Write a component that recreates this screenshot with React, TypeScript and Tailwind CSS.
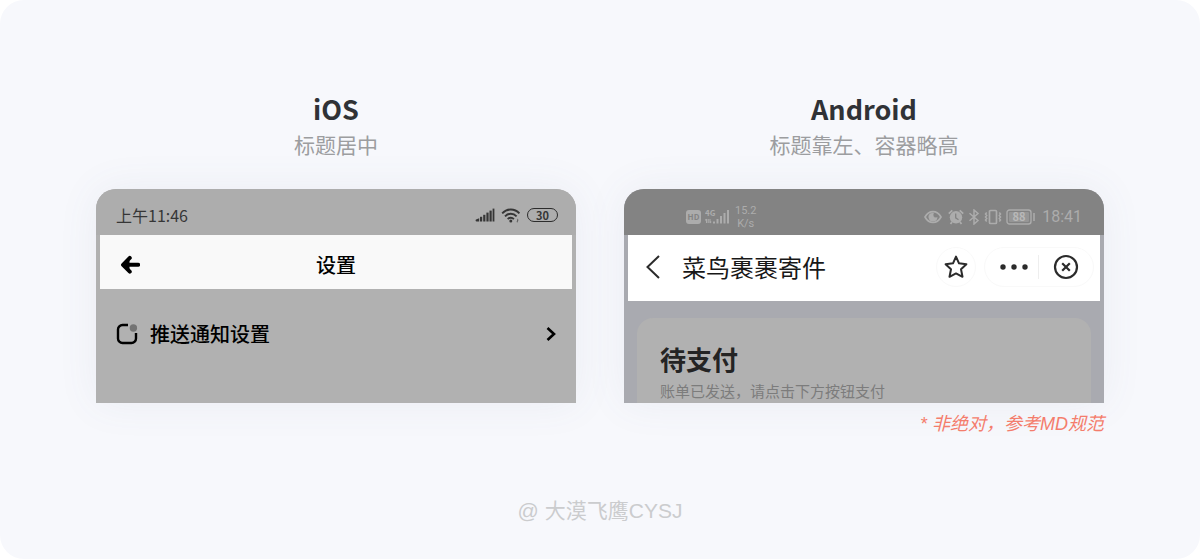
import type { ReactNode } from 'react';

interface IColumnProps {
    title: string;
    subtitle: string;
    children: ReactNode;
}

const Column = ({ title, subtitle, children }: IColumnProps) => (
    <section className="flex min-w-0 flex-1 flex-col">
        <h2 className="text-center text-[27px] leading-9 font-bold text-[#303236]">{title}</h2>
        <p className="text-center text-[21px] leading-[34px] text-[#9c9da0]">{subtitle}</p>
        {children}
    </section>
);

const SignalIcon = () => (
    <svg width="20" height="14" viewBox="0 0 20 14" fill="currentColor">
        <path d="M1 11.6l3.2-1.4v3.3H1.5C.6 13.5.3 12.1 1 11.6z" />
        <rect x="5" y="8.8" width="2.2" height="4.7" />
        <rect x="8.2" y="6.8" width="2.2" height="6.7" />
        <rect x="11.4" y="4.6" width="2.2" height="8.9" />
        <rect x="14.5" y="2.6" width="2.2" height="10.9" />
        <rect x="17.6" y="0.6" width="1.8" height="12.9" />
    </svg>
);

const WifiIcon = () => (
    <svg width="20" height="15" viewBox="0 0 20 15" fill="none" stroke="currentColor" strokeWidth="1.9">
        <path d="M1.2 5.4c4.8-5.2 12.4-5.2 17.2 0" />
        <path d="M4 8.4c3.3-3.5 8.3-3.5 11.6 0" />
        <path d="M6.7 11.1c1.8-1.8 4.4-1.8 6.2 0" />
        <circle cx="9.8" cy="13" r="1.5" fill="currentColor" stroke="none" />
        <path d="M16.5 10.8v3.6M17.6 12l-2 1.6" strokeWidth="0.8" opacity="0.6" />
    </svg>
);

const BoldArrowIcon = () => (
    <svg width="20" height="20" viewBox="0 0 20 20" fill="none" stroke="currentColor" strokeWidth="3.9" strokeLinecap="round" strokeLinejoin="round">
        <path d="M9.8 2.9L3 9.8l6.8 6.9M4 9.8h14.2" />
        <path d="M4.5 9.8L9 5.5v8.6z" strokeWidth="1" fill="currentColor" />
    </svg>
);

const PushIcon = () => (
    <svg width="22" height="22" viewBox="0 0 22 22" fill="none">
        <path d="M12 2H6.5A4.5 4.5 0 0 0 2 6.5v9A4.5 4.5 0 0 0 6.5 20h9a4.5 4.5 0 0 0 4.5-4.5V10" stroke="currentColor" strokeWidth="2.4" />
        <circle cx="17.4" cy="5" r="3.7" fill="#737373" />
    </svg>
);

const MobileDataIcon = () => (
    <svg width="26" height="18" viewBox="0 0 26 18" fill="currentColor">
        <text x="0" y="8" fontSize="8" fontWeight="700">4G</text>
        <path d="M1.5 15v-4M.3 12.3L1.5 11M5 11v4M5 15l1.2-1.3M3.2 11v4" stroke="currentColor" strokeWidth="1.1" fill="none" />
        <rect x="8" y="13.5" width="2" height="2" />
        <rect x="11.5" y="11" width="2" height="4.5" />
        <rect x="15" y="8" width="2" height="7.5" />
        <rect x="18.5" y="5" width="2" height="10.5" />
        <rect x="22" y="2" width="2" height="13.5" />
    </svg>
);

const EyeIcon = () => (
    <svg width="18" height="14" viewBox="0 0 18 14" fill="none" stroke="currentColor">
        <path d="M1 7c4-7.3 12-7.3 16 0-4 7.3-12 7.3-16 0z" strokeWidth="1.7" />
        <path d="M8 3a4.2 4.2 0 1 0 5.2 4.4C11.5 8.5 8 7 9.5 3.2z" fill="currentColor" strokeWidth="0.6" />
    </svg>
);

const AlarmIcon = () => (
    <svg width="16" height="16" viewBox="0 0 16 16" fill="none">
        <circle cx="8" cy="8.3" r="6.2" fill="currentColor" />
        <path d="M.8 4.6l3.5-3.3M15.2 4.6l-3.5-3.3M4 13l-1.5 2M12 13l1.5 2" stroke="currentColor" strokeWidth="1.8" />
        <path d="M7.7 4.6v4.2l2.8 1.9" stroke="#838383" strokeWidth="1.3" />
    </svg>
);

const BluetoothIcon = () => (
    <svg width="12" height="16" viewBox="0 0 12 16" fill="none" stroke="currentColor" strokeWidth="1.5">
        <path d="M1.5 4.3l8.5 7.2L6 15V1l4 3.5-8.5 7.2" />
    </svg>
);

const VibrateIcon = () => (
    <svg width="18" height="16" viewBox="0 0 18 16" fill="none" stroke="currentColor">
        <rect x="5.5" y="1.5" width="7" height="13" rx="1" strokeWidth="1.7" />
        <path d="M2.7 3.5L1.5 5l1.2 1.5L1.5 8l1.2 1.5L1.5 11l1.2 1.5M15.3 3.5L16.5 5l-1.2 1.5L16.5 8l-1.2 1.5 1.2 1.5-1.2 1.5" strokeWidth="1.5" />
    </svg>
);

const BatteryIcon = () => (
    <svg width="30" height="16" viewBox="0 0 30 16" fill="none">
        <rect x="1" y="1" width="24" height="14" rx="2.5" stroke="currentColor" strokeWidth="1.4" />
        <rect x="3" y="3" width="20" height="10" rx="1" fill="currentColor" opacity="0.45" />
        <path d="M28 4v8" stroke="currentColor" strokeWidth="1.5" />
        <text x="13" y="12" textAnchor="middle" fontSize="11" fontWeight="700" fill="#b9b9b9">88</text>
    </svg>
);

const StarIcon = () => (
    <svg width="24" height="24" viewBox="0 0 24 24" fill="none" stroke="currentColor" strokeWidth="2" strokeLinejoin="round">
        <path d="M12 1.6l3 6.7 7.4.9-5.4 5 1.5 7.6-6.5-3.4-6.5 3.4L7 14.2l-5.4-5 7.4-.9z" />
    </svg>
);

const CloseIcon = () => (
    <svg width="26" height="26" viewBox="0 0 26 26" fill="none" stroke="currentColor" strokeWidth="2.2">
        <circle cx="13" cy="13" r="11" />
        <path d="M9.2 9.2l7.6 7.6M16.8 9.2l-7.6 7.6" />
    </svg>
);

const IosPhone = () => (
    <div className="mt-7 h-[214px] overflow-hidden rounded-t-[20px] bg-[#b1b1b1] shadow-[0_0_40px_rgba(90,100,140,0.08)]">
        {/* Status bar */}
        <div className="flex h-[46px] items-center bg-[#adadad] pt-1.5 pr-[18px] pl-5 text-[#363636]">
            <span className="text-base leading-6">上午11:46</span>
            <div className="ml-auto flex items-center gap-1.5">
                <SignalIcon />
                <WifiIcon />
                <span className="flex h-[14px] w-[31px] items-center justify-center rounded-full border border-[#2c2c2c] text-[11px] leading-3 font-bold">30</span>
            </div>
        </div>

        {/* Navigation bar */}
        <header className="mx-1 grid h-[54px] grid-cols-[1fr_auto_1fr] items-center bg-[#f9f9f9] px-5 pt-1.5 text-black">
            <button aria-label="返回" className="justify-self-start">
                <BoldArrowIcon />
            </button>
            <h3 className="text-xl leading-6 font-medium">设置</h3>
        </header>

        {/* Settings row */}
        <button className="mt-[33px] flex w-full items-center pr-[18px] pl-5 text-black">
            <PushIcon />
            <span className="ml-3 text-xl leading-6 font-medium">推送通知设置</span>
            <svg className="ml-auto" width="14" height="16" viewBox="0 0 14 16" fill="none" stroke="currentColor" strokeWidth="2.6">
                <path d="M3.5 2L10 8l-6.5 6" />
            </svg>
        </button>
    </div>
);

const AndroidPhone = () => (
    <div className="mt-7 h-[214px] overflow-hidden rounded-t-[20px] bg-[#a9aab0] shadow-[0_0_40px_rgba(90,100,140,0.08)]">
        {/* Status bar */}
        <div className="flex h-[46px] items-center bg-[#838383] pt-2.5 pr-[22px] pl-[62px] text-[#acacac]">
            <span className="flex h-[14px] w-[15px] items-center justify-center rounded-[3px] bg-[#acacac] text-[8px] font-bold text-[#838383]">HD</span>
            <span className="ml-1">
                <MobileDataIcon />
            </span>
            <span className="ml-1 flex flex-col items-center font-['Roboto','Noto_Sans_CJK_SC',sans-serif] text-[11px] leading-[13px]">
                <span>15.2</span>
                <span>K/s</span>
            </span>
            <div className="ml-auto flex items-center gap-1">
                <EyeIcon />
                <span className="ml-0.5">
                    <AlarmIcon />
                </span>
                <BluetoothIcon />
                <VibrateIcon />
                <BatteryIcon />
                <span className="ml-0.5 font-['Roboto','Noto_Sans_CJK_SC',sans-serif] text-base leading-6">18:41</span>
            </div>
        </div>

        {/* Navigation bar */}
        <header className="mx-1 flex h-[66px] items-center bg-white pr-1.5 pb-0.5 pl-4 text-[#2b2b2b]">
            <button aria-label="返回">
                <svg width="18" height="26" viewBox="0 0 18 26" fill="none" stroke="currentColor" strokeWidth="2">
                    <path d="M15 2L3.5 13 15 24" />
                </svg>
            </button>
            <h3 className="ml-5 text-2xl leading-8 text-[#181818]">菜鸟裹裹寄件</h3>
            <button aria-label="收藏" className="ml-auto flex size-10 items-center justify-center rounded-full border border-[#f9f9f9]">
                <StarIcon />
            </button>
            <div className="ml-2 flex h-10 items-center rounded-full border border-[#f9f9f9]">
                <button aria-label="更多" className="flex h-6 w-[54px] items-center justify-end border-r border-[#eeeeee] pr-2.5">
                    <svg width="28" height="6" viewBox="0 0 28 6" fill="currentColor">
                        <circle cx="3" cy="3" r="2.7" />
                        <circle cx="14" cy="3" r="2.7" />
                        <circle cx="25" cy="3" r="2.7" />
                    </svg>
                </button>
                <button aria-label="关闭" className="flex w-[54px] justify-center">
                    <CloseIcon />
                </button>
            </div>
        </header>

        {/* Payment card */}
        <div className="mx-[13px] mt-[17px] h-24 rounded-t-2xl bg-[#b1b1b1] px-[23px] pt-[23px]">
            <h4 className="text-[26px] leading-9 font-bold text-[#242424]">待支付</h4>
            <p className="text-[15px] leading-7 text-[#7c7c7c]">账单已发送，请点击下方按钮支付</p>
        </div>
    </div>
);

export default function App() {
    return (
        <div className="bg-white">
            <main
                lang="zh-CN"
                className="flex min-h-screen flex-col rounded-3xl bg-[#f7f8fc] px-24 pt-[91px] pb-8 font-['Noto_Sans_CJK_SC',sans-serif]"
            >
                <div className="flex gap-12">
                    <Column title="iOS" subtitle="标题居中">
                        <IosPhone />
                    </Column>
                    <Column title="Android" subtitle="标题靠左、容器略高">
                        <AndroidPhone />
                        <p className="mt-[7px] text-right font-['Liberation_Sans','Noto_Sans_CJK_SC',sans-serif] text-lg leading-7 text-[#f47d6c] italic">
                            * 非绝对，参考MD规范
                        </p>
                    </Column>
                </div>
                <footer className="mt-auto text-center font-['Liberation_Sans','Noto_Sans_CJK_SC',sans-serif] text-[21px] leading-8 text-[#cbccce]">
                    @ 大漠飞鹰CYSJ
                </footer>
            </main>
        </div>
    );
}
